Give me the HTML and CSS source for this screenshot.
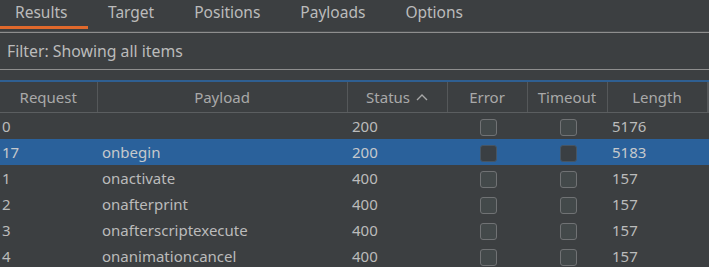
FILE: index.html
```html
<!DOCTYPE html>
<html lang="en">
<head>
    <meta charset="UTF-8">
    <title>Intruder Results</title>
    <link rel="stylesheet" href="styles.css">
</head>
<body>
    <div class="tabBar">
        <div class="tab active">Results</div>
        <div class="tab">Target</div>
        <div class="tab">Positions</div>
        <div class="tab">Payloads</div>
        <div class="tab">Options</div>
    </div>
    <div class="filterBar">Filter: Showing all items</div>
    <div class="tableWrap">
        <table class="results">
            <colgroup>
                <col class="cReq">
                <col class="cPay">
                <col class="cStat">
                <col class="cErr">
                <col class="cTime">
                <col class="cLen">
                <col>
            </colgroup>
            <thead>
                <tr>
                    <th>Request</th>
                    <th>Payload</th>
                    <th>Status <svg class="sortIcon" width="12" height="7" viewBox="0 0 12 7"><path d="M1 6 L6 1 L11 6" fill="none" stroke="#a8a8a8" stroke-width="1.4"/></svg></th>
                    <th>Error</th>
                    <th>Timeout</th>
                    <th>Length</th>
                    <th></th>
                </tr>
            </thead>
            <tbody>
                <tr><td>0</td><td></td><td>200</td><td class="box"><span class="check"></span></td><td class="box"><span class="check"></span></td><td>5176</td><td></td></tr>
                <tr class="selected"><td>17</td><td>onbegin</td><td>200</td><td class="box"><span class="check"></span></td><td class="box"><span class="check"></span></td><td>5183</td><td></td></tr>
                <tr><td>1</td><td>onactivate</td><td>400</td><td class="box"><span class="check"></span></td><td class="box"><span class="check"></span></td><td>157</td><td></td></tr>
                <tr><td>2</td><td>onafterprint</td><td>400</td><td class="box"><span class="check"></span></td><td class="box"><span class="check"></span></td><td>157</td><td></td></tr>
                <tr><td>3</td><td>onafterscriptexecute</td><td>400</td><td class="box"><span class="check"></span></td><td class="box"><span class="check"></span></td><td>157</td><td></td></tr>
                <tr><td>4</td><td>onanimationcancel</td><td>400</td><td class="box"><span class="check"></span></td><td class="box"><span class="check"></span></td><td>157</td><td></td></tr>
            </tbody>
        </table>
    </div>
</body>
</html>
```
FILE: styles.css
```css
body
{
    margin: 0;
    background: #3c3f41;
    color: #bbbbbb;
    font-family: "Noto Sans", "Open Sans", sans-serif;
    font-size: 15px;
    overflow: hidden;
}
.tabBar
{
    display: flex;
    height: 28px;
    border-bottom: 1px solid #4b4e50;
    padding-bottom: 3px;
    font-size: 15.5px;
}
.tab
{
    padding: 0 20px;
    line-height: 24px;
    color: #bbbbbb;
}
.tab.active
{
    padding-left: 15px;
    width: 53px;
    border-bottom: 3px solid #e0692c;
    margin-bottom: -1px;
}
.filterBar
{
    border-top: 1px solid #8e8e8e;
    border-bottom: 1px solid #8e8e8e;
    height: 36px;
    line-height: 36px;
    padding-left: 7px;
    font-size: 15.8px;
}
.tableWrap
{
    margin-top: 10px;
    border-top: 2px solid #2f5f91;
}
.results
{
    width: 709px;
    table-layout: fixed;
    border-collapse: collapse;
}
.cReq { width: 97px; }
.cPay { width: 250px; }
.cStat { width: 100px; }
.cErr { width: 80px; }
.cTime { width: 80px; }
.cLen { width: 100px; }
.results th
{
    height: 30px;
    font-weight: normal;
    color: #a9a9a9;
    border-right: 1px solid #55585a;
    border-bottom: 1px solid #5b5e60;
    padding: 0;
    white-space: nowrap;
}
.sortIcon
{
    margin-left: 2px;
    vertical-align: 2px;
}
.results td
{
    height: 26px;
    padding: 0 0 0 5px;
    white-space: nowrap;
}
.results td:first-child
{
    padding-left: 2px;
}
.results td.box
{
    padding: 0 0 0 2px;
    text-align: center;
}
.check
{
    display: inline-block;
    box-sizing: border-box;
    width: 17px;
    height: 17px;
    border: 1px solid #707274;
    border-radius: 3px;
    background: #43494a;
    vertical-align: middle;
}
.selected
{
    background: #2a619b;
    color: #c6c9cc;
}
.selected .check
{
    background: #3a3f43;
    border-color: #465564;
}
```
